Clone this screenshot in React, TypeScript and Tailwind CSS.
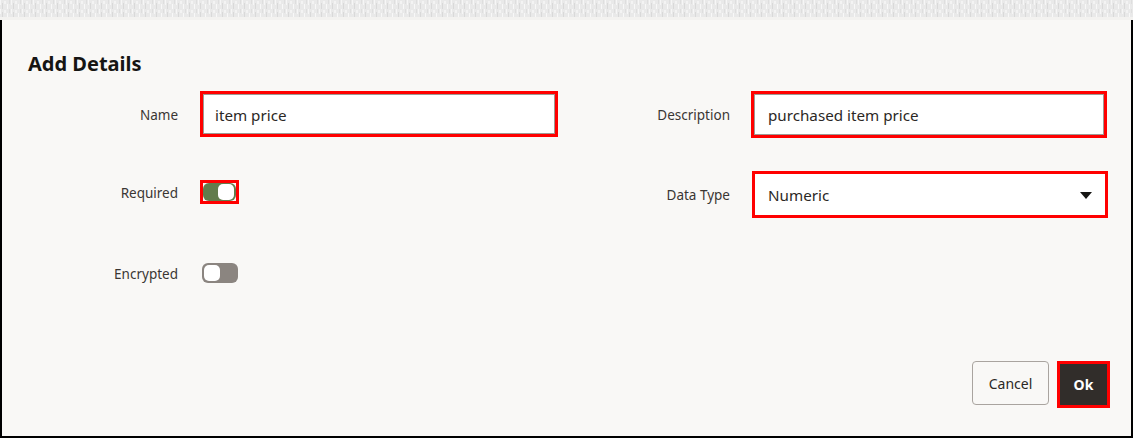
import { useState } from 'react';

const font = { fontFamily: '"Noto Sans", "Open Sans", Arial, sans-serif' };

// Red outline used to call out the fields that were filled in
function Callout({ className = '', children }: { className?: string; children: React.ReactNode }) {
  return <div className={`border-[3px] border-[#ff0000] ${className}`}>{children}</div>;
}

function Label({ children }: { children: React.ReactNode }) {
  return (
    <div className="w-[150px] shrink-0 pt-[2px] text-right text-[13.5px] text-[#3a3633]">{children}</div>
  );
}

function Toggle({ on, onChange, className = '' }: { on: boolean; onChange: () => void; className?: string }) {
  return (
    <button
      type="button"
      onClick={onChange}
      className={`flex items-center rounded-[6px] p-[2px] ${
        on ? 'justify-end bg-[#627c4c]' : 'justify-start bg-[#8b8580]'
      } ${className}`}
    >
      <span className="h-[16px] w-[16px] rounded-[5px] bg-white" />
    </button>
  );
}

export default function App() {
  const [required, setRequired] = useState(true);
  const [encrypted, setEncrypted] = useState(false);

  return (
    <div className="flex h-[438px] w-[1133px] flex-col bg-white" style={font}>
      {/* torn paper strip along the top edge */}
      <div className="relative h-[20px] w-full overflow-hidden bg-[#e9e9e9]">
        <svg className="absolute inset-0 h-full w-full" preserveAspectRatio="none">
          <defs>
            <pattern id="grain" width="11" height="9" patternUnits="userSpaceOnUse">
              <rect x="0" y="0" width="1" height="5" fill="#f6f6f6" />
              <rect x="2" y="3" width="1" height="6" fill="#d9d9d9" />
              <rect x="4" y="1" width="2" height="3" fill="#f3f3f3" />
              <rect x="7" y="4" width="1" height="5" fill="#f8f8f8" />
              <rect x="9" y="0" width="1" height="4" fill="#dedede" />
            </pattern>
          </defs>
          <rect width="100%" height="100%" fill="url(#grain)" />
        </svg>
        <div className="absolute bottom-0 left-0 h-[3px] w-full bg-[#f3f2f0]" />
      </div>

      <div className="flex flex-1 flex-col border-x-2 border-b-2 border-black bg-[#f9f8f6] pl-[26px] pr-[21px]">
        <h1 className="mt-[30px] text-[20px] font-bold leading-[28px] text-[#161513]">Add Details</h1>

        <div className="mt-[13px] flex gap-[22px]">
          {/* left column */}
          <div className="flex w-[530px] flex-col">
            <div className="flex h-[46px] items-center gap-[22px]">
              <Label>Name</Label>
              <Callout className="h-[46px] w-[358px]">
                <div className="flex h-full items-center border border-[#9e9994] bg-white pl-[11px] pt-[2px] text-[15.2px] text-[#2b2825]">
                  item price
                </div>
              </Callout>
            </div>
            <div className="mt-[43px] flex h-[24px] items-center gap-[22px]">
              <Label>Required</Label>
              <Callout className="flex h-[24px] w-[39px]">
                <Toggle
                  on={required}
                  onChange={() => setRequired(!required)}
                  className="h-full w-full rounded-[2px] p-[1px]"
                />
              </Callout>
            </div>
            <div className="mt-[57px] flex h-[24px] items-center gap-[24px]">
              <Label>Encrypted</Label>
              <Toggle
                on={encrypted}
                onChange={() => setEncrypted(!encrypted)}
                className="h-[20px] w-[36px]"
              />
            </div>
          </div>

          {/* right column */}
          <div className="flex flex-col">
            <div className="flex h-[47px] items-center gap-[21px]">
              <Label>Description</Label>
              <Callout className="h-[47px] w-[356px]">
                <div className="flex h-full items-center border border-[#9e9994] bg-white pl-[13px] pt-[2px] text-[15.2px] text-[#2b2825]">
                  purchased item price
                </div>
              </Callout>
            </div>
            <div className="mt-[33px] flex h-[47px] items-center gap-[22px]">
              <Label>Data Type</Label>
              <Callout className="h-[47px] w-[356px]">
                <div className="flex h-full items-center justify-between bg-white pl-[13px] pr-[13px] pt-[2px] text-[15.2px] text-[#2b2825]">
                  <span>Numeric</span>
                  <svg width="12" height="7" viewBox="0 0 12 7">
                    <path d="M0 0h12L6 7z" fill="#161513" />
                  </svg>
                </div>
              </Callout>
            </div>
          </div>
        </div>

        <div className="mt-auto mb-[28px] flex items-start justify-end gap-[8px]">
          <button
            type="button"
            className="h-[44px] w-[77px] rounded-[4px] border border-[#a9a49f] text-[14px] text-[#2b2825]"
          >
            Cancel
          </button>
          <Callout className="h-[47px] w-[53px]">
            <button type="button" className="h-full w-full bg-[#312d2a] text-[14px] font-bold text-white">
              Ok
            </button>
          </Callout>
        </div>
      </div>
    </div>
  );
}
